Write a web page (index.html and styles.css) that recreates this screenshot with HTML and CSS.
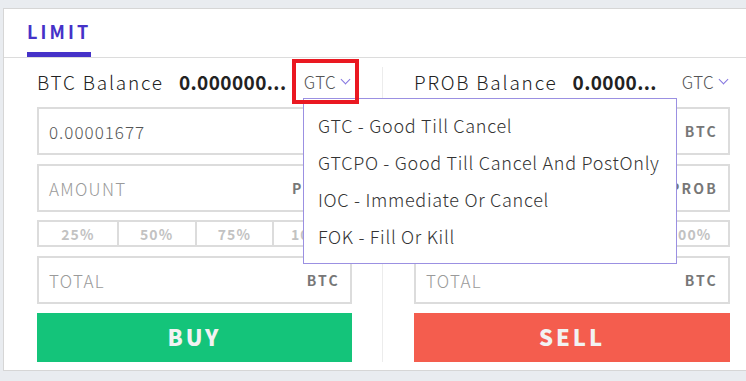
FILE: index.html
```html
<!DOCTYPE html>
<html lang="en">
<head>
    <meta charset="UTF-8">
    <meta name="viewport" content="width=device-width, initial-scale=1.0">
    <title>Limit order</title>
    <link rel="stylesheet" href="styles.css">
</head>
<body>
    <div class="card">
        <div class="tabs">
            <span class="tab active">LIMIT</span>
        </div>
        <div class="order">
            <div class="side">
                <div class="balance">
                    <span class="balanceTitle">BTC Balance</span>
                    <span class="balanceValue">0.000000...</span>
                    <span class="tif">GTC <span class="chevron"></span></span>
                </div>
                <div class="field">
                    <span class="value">0.00001677</span>
                    <span class="unit">BTC</span>
                </div>
                <div class="field">
                    <span class="placeholder">AMOUNT</span>
                    <span class="unit">PROB</span>
                </div>
                <div class="percent">
                    <span>25%</span><span>50%</span><span>75%</span><span>100%</span>
                </div>
                <div class="field">
                    <span class="placeholder">TOTAL</span>
                    <span class="unit">BTC</span>
                </div>
                <button class="btn buy">BUY</button>
            </div>
            <div class="side right">
                <div class="balance">
                    <span class="balanceTitle">PROB Balance</span>
                    <span class="balanceValue">0.0000...</span>
                    <span class="tif">GTC <span class="chevron"></span></span>
                </div>
                <div class="field">
                    <span class="value">0.00001677</span>
                    <span class="unit">BTC</span>
                </div>
                <div class="field">
                    <span class="placeholder">AMOUNT</span>
                    <span class="unit">PROB</span>
                </div>
                <div class="percent">
                    <span>25%</span><span>50%</span><span>75%</span><span>100%</span>
                </div>
                <div class="field">
                    <span class="placeholder">TOTAL</span>
                    <span class="unit">BTC</span>
                </div>
                <button class="btn sell">SELL</button>
            </div>
        </div>

        <ul class="menu">
            <li>GTC - Good Till Cancel</li>
            <li>GTCPO - Good Till Cancel And PostOnly</li>
            <li>IOC - Immediate Or Cancel</li>
            <li>FOK - Fill Or Kill</li>
        </ul>
        <div class="highlight"></div>
    </div>
</body>
</html>
```

FILE: styles.css
```css
* {
    font-family: "Noto Sans CJK KR", "Noto Sans", sans-serif;
    box-sizing: border-box;
}
body {
    margin: 0;
    background: #e9ecf0;
    overflow: hidden;
    font-weight: 300;
}
.card {
    position: relative;
    margin: 8px 0 0 3px;
    width: 790px;
    background: #fff;
    border: 1px solid #d6d6d6;
}
.tabs {
    height: 49px;
    padding-left: 23px;
    border-bottom: 1px solid #dcdcdc;
    display: flex;
    align-items: flex-end;
}
.tab {
    font-size: 18px;
    font-weight: bold;
    letter-spacing: 3.1px;
    color: #4532c8;
    padding-bottom: 10px;
    border-bottom: 5px solid #4532c8;
    line-height: 21px;
}
.order {
    display: flex;
    padding: 9px 0 8px;
}
.side {
    width: 378px;
    padding: 0 30px 0 33px;
    display: flex;
    flex-direction: column;
}
.side.right {
    border-left: 1px solid #ececec;
    padding-left: 31px;
    width: 410px;
    padding-right: 62px;
}
.balance {
    height: 32px;
    padding-bottom: 3px;
    display: flex;
    align-items: center;
    margin-bottom: 8px;
    white-space: nowrap;
}
.balanceTitle {
    font-size: 19px;
    letter-spacing: 1.8px;
    color: #222;
}
.balanceValue {
    margin-left: 15px;
    font-size: 19px;
    font-weight: bold;
    letter-spacing: 0.4px;
    color: #222;
}
.tif {
    margin-left: auto;
    font-size: 17px;
    letter-spacing: 0.3px;
    color: #555;
    display: flex;
    align-items: center;
}
.chevron {
    width: 7px;
    height: 7px;
    margin: -4px 3px 0 6px;
    border-right: 1px solid #8576e0;
    border-bottom: 1px solid #8576e0;
    transform: rotate(45deg);
}
.field {
    height: 48px;
    border: 2px solid #dcdcdc;
    display: flex;
    align-items: center;
    justify-content: space-between;
    padding: 0 12px 0 10px;
    margin-bottom: 9px;
}
.value {
    font-size: 17px;
    letter-spacing: 1px;
    color: #555;
}
.placeholder {
    font-size: 17px;
    letter-spacing: 1.3px;
    color: #9a9a9a;
}
.unit {
    font-size: 14px;
    font-weight: bold;
    letter-spacing: 2.2px;
    color: #777;
    margin-right: -2px;
}
.percent {
    height: 27px;
    margin: -1px 0 9px;
    display: grid;
    grid-template-columns: repeat(4, 1fr);
    border: 2px solid #dcdcdc;
}
.percent span {
    display: flex;
    align-items: center;
    justify-content: center;
    font-size: 14px;
    font-weight: bold;
    letter-spacing: 1px;
    color: #c2c2c2;
    border-left: 2px solid #dcdcdc;
}
.percent span:first-child {
    border-left: none;
}
.btn {
    height: 49px;
    border: none;
    font-size: 22px;
    font-weight: 900;
    letter-spacing: 3px;
    color: #f2f2f2;
    padding: 0 0 4px;
}
.buy {
    background: #14c47a;
}
.sell {
    background: #f45d4e;
}
.menu {
    position: absolute;
    left: 299px;
    top: 89px;
    width: 374px;
    margin: 0;
    padding: 8px 0;
    list-style: none;
    background: #fff;
    border: 1px solid #9b90e2;
}
.menu li {
    height: 37px;
    line-height: 37px;
    padding-left: 14px;
    padding-bottom: 1px;
    font-size: 18px;
    letter-spacing: 0.7px;
    color: #333;
    white-space: nowrap;
}
.highlight {
    position: absolute;
    left: 288px;
    top: 50px;
    width: 67px;
    height: 45px;
    border: 4px solid #ea1821;
}
```
